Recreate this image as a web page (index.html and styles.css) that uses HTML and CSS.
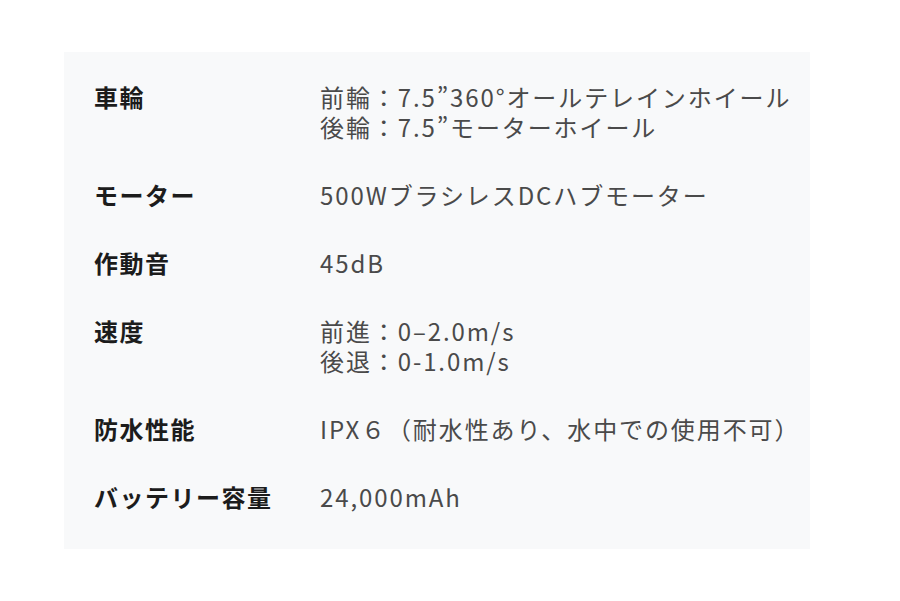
FILE: index.html
```html
<!DOCTYPE html>
<html lang="ja">
<head>
<meta charset="utf-8">
<title>仕様</title>
<link rel="stylesheet" href="styles.css">
</head>
<body>
<section class="specs">
  <div class="row">
    <div class="label">車輪</div>
    <div class="value">前輪：7.5”360°オールテレインホイール<br>後輪：7.5”モーターホイール</div>
  </div>
  <div class="row">
    <div class="label">モーター</div>
    <div class="value">500WブラシレスDCハブモーター</div>
  </div>
  <div class="row">
    <div class="label">作動音</div>
    <div class="value">45dB</div>
  </div>
  <div class="row">
    <div class="label">速度</div>
    <div class="value">前進：0–2.0m/s<br>後退：0-1.0m/s</div>
  </div>
  <div class="row">
    <div class="label">防水性能</div>
    <div class="value">IPX６（耐水性あり、水中での使用不可）</div>
  </div>
  <div class="row">
    <div class="label">バッテリー容量</div>
    <div class="value">24,000mAh</div>
  </div>
</section>
</body>
</html>
```

FILE: styles.css
```css
html, body {
  margin: 0;
  padding: 0;
  background: #ffffff;
}

body {
  padding: 52px 0 0 64px;
  font-family: "Noto Sans CJK JP", "Noto Sans", sans-serif;
}

.specs {
  box-sizing: border-box;
  width: 746px;
  height: 497px;
  background: #f8f9fa;
  padding: 30px 0 37px 30px;
  display: flex;
  flex-direction: column;
  gap: 38px;
}

.row {
  display: grid;
  grid-template-columns: 226px 1fr;
}

.label {
  font-size: 24px;
  line-height: 30px;
  font-weight: 700;
  letter-spacing: 1.5px;
  color: #1c1c1c;
  white-space: nowrap;
}

.value {
  font-size: 24px;
  line-height: 30px;
  font-weight: 400;
  letter-spacing: 1.9px;
  color: #4a4a4a;
  white-space: nowrap;
}
```
